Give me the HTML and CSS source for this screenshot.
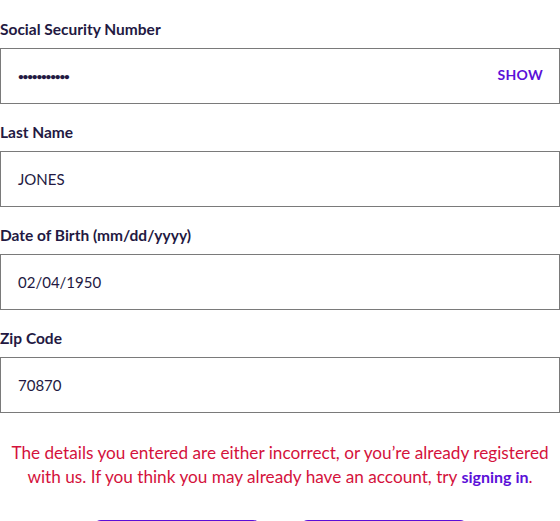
FILE: index.html
```html
<!DOCTYPE html>
<html>
<head>
<meta charset="utf-8">
<link rel="stylesheet" href="styles.css">
</head>
<body>
<form class="form">
  <div class="field">
    <label class="label">Social Security Number</label>
    <div class="input">
      <span class="value dots">•••••••••••</span>
      <span class="show">SHOW</span>
    </div>
  </div>
  <div class="field">
    <label class="label">Last Name</label>
    <div class="input"><span class="value">JONES</span></div>
  </div>
  <div class="field">
    <label class="label">Date of Birth (mm/dd/yyyy)</label>
    <div class="input"><span class="value">02/04/1950</span></div>
  </div>
  <div class="field">
    <label class="label">Zip Code</label>
    <div class="input"><span class="value">70870</span></div>
  </div>
  <p class="error">The details you entered are either incorrect, or you’re already registered with us. If you think you may already have an account, try <a class="link">signing in</a>.</p>
  <div class="buttons">
    <div class="btn"></div>
    <div class="btn"></div>
  </div>
</form>
</body>
</html>
```
FILE: styles.css
```css
html, body { margin: 0; padding: 0; background: #fff; }
body { font-family: Lato, "Noto Sans", sans-serif; color: #211842; width: 560px; overflow: hidden; height: 521px; }
.form { display: flex; flex-direction: column; padding-top: 19px; }
.field { display: flex; flex-direction: column; margin-bottom: 18px; }
.label { font-size: 15.5px; font-weight: 700; line-height: 20px; margin-bottom: 9px; color: #231942; }
.input { height: 56px; box-sizing: border-box; border: 1px solid #7a7a7a; display: flex; align-items: center; justify-content: space-between; padding: 0 16px 0 17px; }
.value { font-size: 15px; color: #231942; }
.dots { font-size: 10px; letter-spacing: -1.2px; font-weight: 700; }
.show { font-size: 14px; font-weight: 700; color: #5b10d8; letter-spacing: 0.3px; margin-top: -3px; }
.error { margin: 10px 0 0; text-align: center; color: #d4123c; font-size: 17.2px; line-height: 24px; height: 48px; padding: 0 2px; }
.link { color: #5b10d8; font-weight: 700; font-size: 16px; line-height: 20px; }
.buttons { display: flex; justify-content: center; gap: 39px; margin-top: 31px; }
.btn { width: 168px; height: 48px; flex: none; background: #5b10d8; border-radius: 8px; }
```
